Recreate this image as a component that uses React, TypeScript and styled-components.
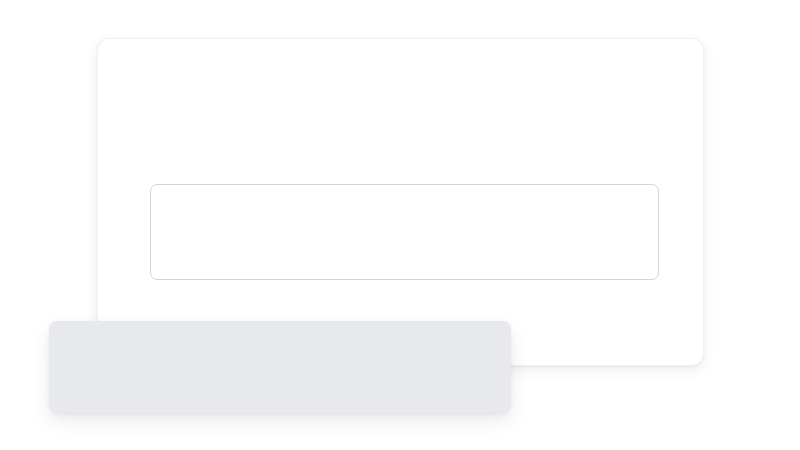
import React from "react";
import styled, { createGlobalStyle } from "styled-components";

const GlobalStyle = createGlobalStyle`
  html, body {
    margin: 0;
    padding: 0;
    background: #ffffff;
    font-family: "Inter", "Liberation Sans", sans-serif;
  }
`;

const Stage = styled.main`
  width: 800px;
  height: 450px;
  display: flex;
  align-items: flex-start;
  justify-content: center;
  padding-top: 38px;
  box-sizing: border-box;
`;

const Wrapper = styled.div`
  position: relative;
  margin-left: 1px;
`;

const Card = styled.section`
  width: 607px;
  height: 328px;
  box-sizing: border-box;
  padding: 145px 44px 86px 52px;
  background: #ffffff;
  border: 1px solid #f0f0f1;
  border-radius: 12px;
  box-shadow: 0 4px 14px rgba(0, 0, 0, 0.07), 0 1px 3px rgba(0, 0, 0, 0.05);
`;

const Field = styled.div`
  width: 100%;
  height: 96px;
  box-sizing: border-box;
  border: 1px solid #d4d4d8;
  border-radius: 7px;
  background: #ffffff;
`;

const Toast = styled.div`
  position: absolute;
  left: -48px;
  top: 283px;
  width: 462px;
  height: 92px;
  background: #e8e9ec;
  border-radius: 8px;
  box-shadow: 0 8px 20px rgba(0, 0, 0, 0.08), 0 2px 5px rgba(0, 0, 0, 0.05);
`;

const App: React.FC = () => {
  return (
    <>
      <GlobalStyle />
      <Stage>
        <Wrapper>
          <Card>
            <Field />
          </Card>
          <Toast />
        </Wrapper>
      </Stage>
    </>
  );
};

export default App;
